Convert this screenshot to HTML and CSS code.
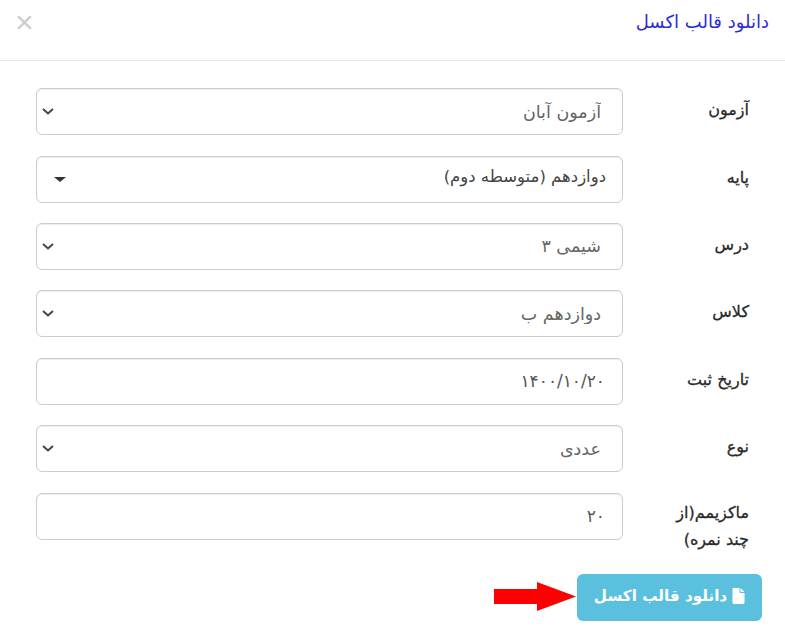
FILE: index.html
```html
<!DOCTYPE html>
<html lang="fa" dir="rtl">
<head>
<meta charset="utf-8">
<title>دانلود قالب اکسل</title>
<link rel="stylesheet" href="styles.css">
</head>
<body>
<div class="modal">
  <header class="modal-header">
    <h4 class="modal-title">دانلود قالب اکسل</h4>
    <span class="close">×</span>
  </header>
  <form class="form">
    <div class="row">
      <label class="label">آزمون</label>
      <select class="control select"><option>آزمون آبان</option></select>
    </div>
    <div class="row">
      <label class="label">پایه</label>
      <div class="control picker"><span class="picker-text">دوازدهم (متوسطه دوم)</span><span class="caret"></span></div>
    </div>
    <div class="row">
      <label class="label">درس</label>
      <select class="control select"><option>شیمی ۳</option></select>
    </div>
    <div class="row">
      <label class="label">کلاس</label>
      <select class="control select"><option>دوازدهم ب</option></select>
    </div>
    <div class="row">
      <label class="label">تاریخ ثبت</label>
      <input class="control input" type="text" value="۱۴۰۰/۱۰/۲۰">
    </div>
    <div class="row">
      <label class="label">نوع</label>
      <select class="control select"><option>عددی</option></select>
    </div>
    <div class="row">
      <label class="label label-wrapped">ماکزیمم(از چند نمره)</label>
      <input class="control input" type="text" value="۲۰">
    </div>
    <div class="actions">
      <button class="btn" type="button">
        <svg class="file-icon" viewBox="0 0 12 16" width="13" height="16"><path fill="#fff" d="M0 1.200C0 .5.500 0 1.200 0H7v4.200c0 .5.300.8.800.8H12v9.800c0 .7-.5 1.200-1.200 1.200H1.200C.5 16 0 15.500 0 14.800z"/><path fill="#fff" d="M8 0l4 4H8z"/></svg>
        <span>دانلود قالب اکسل</span>
      </button>
      <svg class="arrow" viewBox="0 0 82 29" width="82" height="29"><path fill="#f00" d="M0 7H43V0L82 14.500 43 29V22H0z"/></svg>
    </div>
  </form>
</div>
</body>
</html>
```
FILE: styles.css
```css
* { box-sizing: border-box; }
html, body { margin: 0; background: #fff; }
body { font-family: "DejaVu Sans", "Noto Sans", sans-serif; color: #333; font-size: 15px; }
.modal { width: 785px; height: 641px; overflow: hidden; }
.modal-header {
  height: 61px;
  border-bottom: 1px solid #e5e5e5;
  padding: 0 16px 0 15px;
  display: flex;
  justify-content: space-between;
  align-items: flex-start;
}
.modal-title { margin: 11px 0 0; font-weight: 400; font-size: 18px; line-height: 22px; color: #2b2bd9; }
.close { font-size: 32px; line-height: 22px; margin-top: 11px; color: #ccc; font-weight: 400; font-family: "Liberation Sans", sans-serif; }
.form { padding: 27.100px 36px 0 36px; display: flex; flex-direction: column; gap: 20.450px; }
.row { display: flex; height: 47px; gap: 46px; }
.label { width: 80px; flex: none; margin-top: 8px; font-size: 16px; line-height: 27px; font-weight: 400; color: #2a2a2a; -webkit-text-stroke: 0.3px #2a2a2a; }
.label-wrapped { margin-top: 6px; }
.control {
  flex: 1;
  min-width: 0;
  height: 47px;
  border: 1px solid #ccc;
  border-radius: 6px;
  background: #fff;
  color: #666;
  font: 400 17.500px "DejaVu Sans", sans-serif;
  padding: 0 21px 0 12px;
  box-shadow: inset 0 1px 1px rgba(0,0,0,.075);
}
.select {
  appearance: none;
  -webkit-appearance: none;
  padding-right: 21px;
  background-image: url("data:image/svg+xml,%3Csvg xmlns='http://www.w3.org/2000/svg' width='12' height='7' viewBox='0 0 12 7'%3E%3Cpath d='M1 1l5 4.500L11 1' fill='none' stroke='%23444' stroke-width='2'/%3E%3C/svg%3E");
  background-repeat: no-repeat;
  background-position: 5px 50%;
}
.input { padding-right: 17px; font-size: 17px; color: #555; }
.picker { display: flex; align-items: center; justify-content: space-between; padding: 0 16px 6px 17px; color: #444; font-size: 16.500px; }
.caret { width: 0; height: 0; border-top: 5px solid #333; border-left: 6px solid transparent; border-right: 6px solid transparent; margin-top: 6px; }
.actions { position: relative; margin: 14px -13px 0 0; display: flex; }
.btn {
  width: 185px;
  height: 47px;
  border: 0;
  border-radius: 6px;
  background: #5bc0de;
  color: #fff;
  font: 700 15.200px "DejaVu Sans", sans-serif;
  display: flex;
  align-items: center;
  justify-content: center;
  gap: 5px;
  padding: 0 0 4px;
}
.file-icon { width: 13px; height: 16px; flex: none; }
.arrow { position: absolute; left: 458px; top: 8px; }
```
